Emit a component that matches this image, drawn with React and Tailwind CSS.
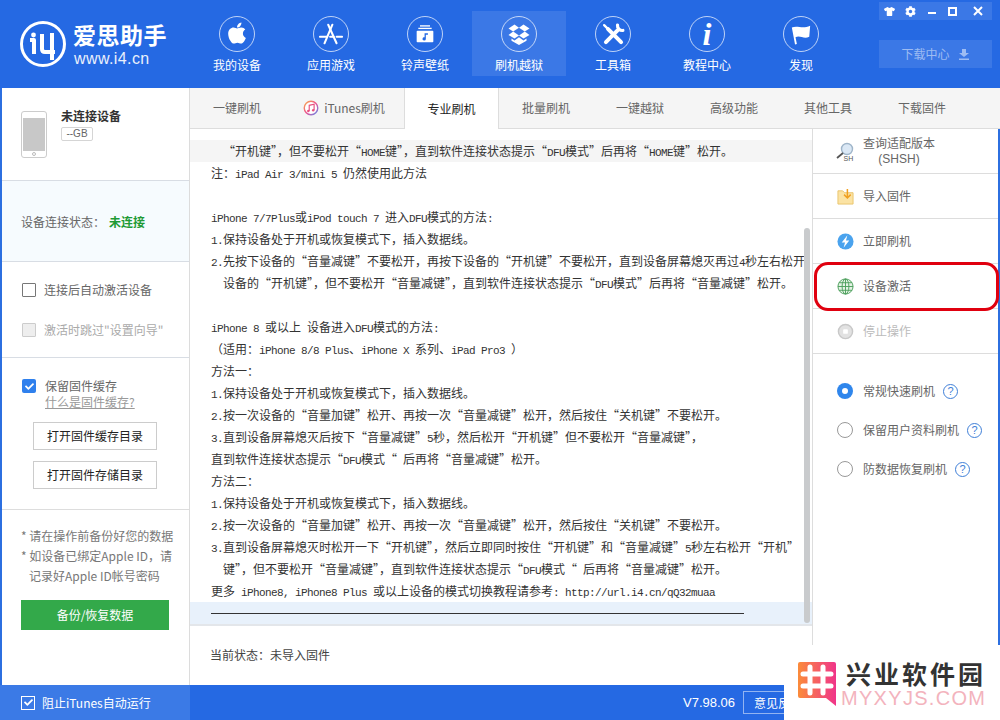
import React from 'react';
import { FaApple, FaCog, FaTshirt, FaCheck } from 'react-icons/fa';

const NAV = [
  { label: '我的设备', icon: <FaApple className="text-[24px] text-white -mt-0.5" /> },
  {
    label: '应用游戏',
    icon: (
      <svg viewBox="0 0 28 28" className="w-[26px] h-[26px]" fill="none" stroke="white" strokeWidth="2.2" strokeLinecap="round">
        <path d="M11 4 L20 24" />
        <path d="M15.5 4 L7 24" />
        <path d="M2 17 L10 17 M13 17 H17 M20 17 H26" strokeWidth="2" />
      </svg>
    ),
  },
  {
    label: '铃声壁纸',
    icon: (
      <svg viewBox="0 0 24 24" className="w-[20px] h-[20px]" fill="white">
        <rect x="6" y="1.5" width="12" height="1.6" />
        <rect x="4" y="4.5" width="16" height="1.6" />
        <path fillRule="evenodd" d="M3 8 H21 A1 1 0 0 1 22 9 V21 A1 1 0 0 1 21 22 H3 A1 1 0 0 1 2 21 V9 A1 1 0 0 1 3 8 Z M11.5 11 V16 A2 2 0 1 0 13 18 V13 H15.5 V11 Z" />
      </svg>
    ),
  },
  {
    label: '刷机越狱',
    icon: (
      <svg viewBox="0 0 24 24" className="w-[24px] h-[24px]" fill="white">
        <path d="M1.5 6.5 L7.5 2.5 L12 5.8 L6.2 9.6 Z" />
        <path d="M22.5 6.5 L16.5 2.5 L12 5.8 L17.8 9.6 Z" />
        <path d="M1.5 13 L6.2 9.6 L12 13.4 L7.5 16.6 Z" />
        <path d="M22.5 13 L17.8 9.6 L12 13.4 L16.5 16.6 Z" />
        <path d="M4.5 16.5 L7.5 18.4 L12 15.2 L16.5 18.4 L19.5 16.5 V18.8 L12 23 L4.5 18.8 Z" />
      </svg>
    ),
    active: true,
  },
  {
    label: '工具箱',
    icon: (
      <svg viewBox="0 0 28 28" className="w-[25px] h-[25px]" fill="none" stroke="white" strokeLinecap="round">
        <path d="M22.5 22.5 L8 8" strokeWidth="4.4" />
        <path d="M3.5 3.5 L8 8" strokeWidth="2.6" />
        <path d="M5.5 22.5 L18.5 9.5" strokeWidth="4.4" />
        <path d="M18.5 3.5 A5.5 5.5 0 0 0 24.5 9.5" strokeWidth="3.6" />
      </svg>
    ),
  },
  {
    label: '教程中心',
    icon: <span className="font-['Liberation_Serif'] font-bold italic text-[32px] leading-none text-white">i</span>,
  },
  {
    label: '发现',
    icon: (
      <svg viewBox="0 0 24 24" className="w-[22px] h-[22px]" fill="white">
        <path d="M2 5 C8 2 13 7 22 3 L21 15 C15 18 11 13 6 15.5 L7.5 23 L5.5 23.5 Z" />
      </svg>
    ),
  },
];

const TABS = [
  { label: '一键刷机', w: 'w-[94px]' },
  { label: 'iTunes刷机', w: 'w-[120px]', itunes: true },
  { label: '专业刷机', w: 'w-[95px]', active: true },
  { label: '批量刷机', w: 'w-[94px]' },
  { label: '一键越狱', w: 'w-[94px]' },
  { label: '高级功能', w: 'w-[94px]' },
  { label: '其他工具', w: 'w-[94px]' },
  { label: '下载固件', w: 'w-[94px]' },
];

const LINES = [
  '  “开机键”，但不要松开“HOME键”，直到软件连接状态提示“DFU模式”后再将“HOME键”松开。',
  '注：iPad Air 3/mini 5 仍然使用此方法',
  '',
  'iPhone 7/7Plus或iPod touch 7 进入DFU模式的方法:',
  '1.保持设备处于开机或恢复模式下，插入数据线。',
  '2.先按下设备的“音量减键”不要松开，再按下设备的“开机键”不要松开，直到设备屏幕熄灭再过4秒左右松开',
  '  设备的“开机键”，但不要松开“音量减键”，直到软件连接状态提示“DFU模式”后再将“音量减键”松开。',
  '',
  'iPhone 8 或以上 设备进入DFU模式的方法:',
  '（适用：iPhone 8/8 Plus、iPhone X 系列、iPad Pro3 ）',
  '方法一：',
  '1.保持设备处于开机或恢复模式下，插入数据线。',
  '2.按一次设备的“音量加键”松开、再按一次“音量减键”松开，然后按住“关机键”不要松开。',
  '3.直到设备屏幕熄灭后按下“音量减键”5秒，然后松开“开机键”但不要松开“音量减键”，',
  '直到软件连接状态提示“DFU模式“ 后再将“音量减键”松开。',
  '方法二：',
  '1.保持设备处于开机或恢复模式下，插入数据线。',
  '2.按一次设备的“音量加键”松开、再按一次“音量减键”松开，然后按住“关机键”不要松开。',
  '3.直到设备屏幕熄灭时松开一下“开机键”，然后立即同时按住“开机键”和“音量减键”5秒左右松开“开机”',
  '  键”，但不要松开“音量减键”，直到软件连接状态提示“DFU模式“ 后再将“音量减键”松开。',
  '更多 iPhone8, iPhone8 Plus 或以上设备的模式切换教程请参考: http://url.i4.cn/qQ32muaa',
];

// latin runs are half width in the original font, so squeeze the mono down to 6px a char
const Line = ({ text }) => (
  <>
    {text.split(/([\x20-\x7e]+)/).map((part, i) =>
      /^[\x20-\x7e]+$/.test(part) ? (
        <span key={i} className="font-['Liberation_Mono'] text-[11px] tracking-[-0.6px]">{part}</span>
      ) : (
        part
      )
    )}
  </>
);

const Help = () => (
  <span className="w-[15px] h-[15px] rounded-full border border-[#3f7fd8] text-[#3f7fd8] text-[11px] leading-[13px] text-center font-['Liberation_Sans'] shrink-0">?</span>
);

const ACTIONS = [
  {
    label: '导入固件',
    icon: (
      <svg viewBox="0 0 18 18" className="w-[17px] h-[17px]">
        <path d="M1 3 H6 L8 5 H17 V17 H1 Z" fill="#fbe3a4" stroke="#e9c46a" />
        <path d="M11 1 V10 M7.5 7 L11 10.5 L14.5 7" fill="none" stroke="#f0a020" strokeWidth="1.6" />
      </svg>
    ),
  },
  {
    label: '立即刷机',
    icon: (
      <svg viewBox="0 0 18 18" className="w-[17px] h-[17px]">
        <circle cx="9" cy="9" r="8.5" fill="#4aa3ee" />
        <path d="M11 2.5 L5 10 H8.5 L7 15.5 L13 8 H9.5 Z" fill="white" />
      </svg>
    ),
  },
  {
    label: '设备激活',
    icon: (
      <svg viewBox="0 0 18 18" className="w-[17px] h-[17px]" fill="#e4f2e4" stroke="#4c9f5c" strokeWidth="1">
        <circle cx="9" cy="9" r="8" />
        <ellipse cx="9" cy="9" rx="3.6" ry="8" fill="none" />
        <path d="M9 1 V17 M1 9 H17 M2 5 H16 M2 13 H16" fill="none" />
      </svg>
    ),
  },
  {
    label: '停止操作',
    muted: true,
    icon: (
      <svg viewBox="0 0 18 18" className="w-[17px] h-[17px]">
        <circle cx="9" cy="9" r="7.5" fill="#e2e2e2" stroke="#c8c8c8" strokeWidth="1.5" />
        <rect x="6.5" y="6.5" width="5" height="5" rx="1" fill="white" />
      </svg>
    ),
  },
];

const RADIOS = [
  { label: '常规快速刷机', on: true },
  { label: '保留用户资料刷机' },
  { label: '防数据恢复刷机' },
];

const Sidebar = () => (
  <aside className="w-[190px] shrink-0 flex flex-col border-l-2 border-[#2c6fe0] border-r border-r-[#dcdcdc] bg-white">
    <div className="h-[93px] flex border-b border-[#d8dde4] pl-[19px] pt-[23px] shrink-0">
      <div className="w-[26px] h-[47px] border border-[#cccccc] rounded-[3px] flex flex-col items-center pt-[6px]">
        <div className="w-[22px] h-[33px] bg-[#c8c8c8]" />
        <div className="w-[4px] h-[4px] rounded-full border border-[#bbbbbb] mt-[1px]" />
      </div>
      <div className="ml-[14px] -mt-[2px]">
        <div className="text-[12px] leading-[16px] font-bold text-[#333333] mt-[-1px]">未连接设备</div>
        <div className="mt-[3px] w-[32px] h-[14px] border border-[#d5d5d5] rounded-[2px] text-[10px] leading-[12px] text-[#666666] text-center font-['Liberation_Sans']">--GB</div>
      </div>
    </div>
    <div className="h-[81px] bg-[#f6fbfe] border-b border-[#d8dde4] flex items-center pl-[19px] pt-[2px] text-[12px] shrink-0">
      <span className="text-[#666666]">设备连接状态：</span>
      <span className="text-[#1f9a35] font-bold ml-[4px]">未连接</span>
    </div>
    <div className="h-[96px] border-b border-[#d8dde4] pl-[20px] shrink-0">
      <label className="flex items-center h-[14px] mt-[21px] text-[12px] text-[#666666]">
        <span className="w-[14px] h-[14px] border border-[#777777] rounded-[1px] bg-white" />
        <span className="ml-[8px]">连接后自动激活设备</span>
      </label>
      <label className="flex items-center h-[14px] mt-[26px] text-[12px] text-[#aaaaaa]">
        <span className="w-[14px] h-[14px] border border-[#cccccc] rounded-[1px] bg-[#eeeeee]" />
        <span className="ml-[8px]">激活时跳过"设置向导"</span>
      </label>
    </div>
    <div className="h-[152px] border-b border-[#dddddd] shrink-0">
      <div className="flex pl-[20px] pt-[20px]">
        <span className="w-[14px] h-[14px] rounded-[2px] bg-[#2f80ed] flex items-center justify-center mt-[1px]">
          <FaCheck className="text-white text-[9px]" />
        </span>
        <div className="ml-[9px] text-[12px] leading-[16px] text-[#666666]">
          <div>保留固件缓存</div>
          <div className="text-[#999999] underline">什么是固件缓存?</div>
        </div>
      </div>
      <div className="mt-[12px] ml-[31px] flex flex-col gap-[11px]">
        <button className="w-[124px] h-[28px] border border-[#cccccc] text-[12px] text-[#222222]">打开固件缓存目录</button>
        <button className="w-[124px] h-[28px] border border-[#cccccc] text-[12px] text-[#222222]">打开固件存储目录</button>
      </div>
    </div>
    <div className="pl-[19px] pt-[16px] text-[12px] leading-[20px] text-[#777777]">
      <div>* 请在操作前备份好您的数据</div>
      <div>* 如设备已绑定Apple ID，请</div>
      <div className="pl-[8px]">记录好Apple ID帐号密码</div>
    </div>
    <button className="mt-[14px] ml-[19px] w-[148px] h-[30px] bg-[#33a94a] text-white text-[12px]">备份/恢复数据</button>
  </aside>
);

const Content = () => (
  <main className="flex-1 flex flex-col min-w-0 bg-white">
    <div className="h-[41px] flex bg-[#f5f5f5] border-b border-[#dddddd] shrink-0">
      {TABS.map((t) => (
        <div
          key={t.label}
          className={
            t.w + ' flex items-center justify-center text-[12px] ' +
            (t.active
              ? 'bg-white text-[#222222] h-[41px] border-x border-[#dddddd]'
              : 'text-[#666666]')
          }
        >
          {t.itunes && (
            <svg viewBox="0 0 18 18" className="w-[16px] h-[16px] mr-[5px]">
              <defs>
                <linearGradient id="itunes" x1="0" y1="0" x2="1" y2="1">
                  <stop offset="0" stopColor="#f7b14a" />
                  <stop offset="0.5" stopColor="#ee4f8f" />
                  <stop offset="1" stopColor="#5a8cf0" />
                </linearGradient>
              </defs>
              <circle cx="9" cy="9" r="7.6" fill="white" stroke="url(#itunes)" strokeWidth="1.6" />
              <path d="M7 12.5 V6 L12.5 4.8 V11.2" fill="none" stroke="#e8507f" strokeWidth="1.3" />
              <circle cx="6" cy="12.5" r="1.4" fill="#e8507f" />
              <circle cx="11.5" cy="11.4" r="1.4" fill="#e8507f" />
            </svg>
          )}
          {t.label}
        </div>
      ))}
    </div>
    <div className="flex-1 flex min-h-0">
      <div className="w-[622px] shrink-0 flex flex-col">
        <div className="relative mt-[11px] h-[486px] border-b-2 border-[#e3e6ea]">
          {LINES.map((l, i) => (
            <div
              key={i}
              className={'h-[22px] leading-[22px] pl-[21px] text-[12px] text-[#333333] whitespace-pre ' + (i === 0 ? 'bg-[#f5f5f5]' : '')}
            >
              <Line text={l} />
            </div>
          ))}
          <div className="h-[22px] pl-[21px] pr-[68px] bg-[#e8f1fb] flex items-center">
            <div className="h-px w-full bg-[#333333]" />
          </div>
          <div className="absolute right-[2px] top-[88px] bottom-[1px] w-[6px] rounded-[3px] bg-[#c9cbcd]" />
        </div>
        <div className="flex-1 pl-[20px] pt-[21px] text-[12px] leading-[16px] text-[#444444]">当前状态：未导入固件</div>
      </div>
      <div className="flex-1 border-l border-[#dddddd] relative border-r-2 border-r-[#2c6fe0]">
        <div className="h-[45px] border-b border-[#dddddd] flex items-center pl-[23px] text-[12px] text-[#666666]">
          <svg viewBox="0 0 19 19" className="w-[19px] h-[19px] shrink-0">
            <circle cx="11" cy="7" r="5.5" fill="#dbe8f5" stroke="#9fb5c9" strokeWidth="1.4" />
            <path d="M7 11 L1 16" stroke="#555555" strokeWidth="1.8" />
            <text x="7.5" y="18.5" fontSize="7" fill="#555555" fontFamily="Liberation Sans">SH</text>
          </svg>
          <div className="ml-[8px] text-center leading-[17px]">
            <div>查询适配版本</div>
            <div className="font-['Liberation_Sans']">(SHSH)</div>
          </div>
        </div>
        {ACTIONS.map((a) => (
          <div
            key={a.label}
            className={'h-[45px] border-b border-[#dddddd] flex items-center pl-[24px] text-[12px] ' + (a.muted ? 'text-[#bbbbbb]' : 'text-[#666666]')}
          >
            <span className="shrink-0 mr-[9px] flex">{a.icon}</span>
            {a.label}
          </div>
        ))}
        <div className="pt-[29px] pl-[24px] flex flex-col gap-[23px]">
          {RADIOS.map((r) => (
            <div key={r.label} className="h-[16px] flex items-center text-[12px] text-[#666666]">
              {r.on ? (
                <span className="w-[16px] h-[16px] rounded-full bg-[#2f86ec] flex items-center justify-center shrink-0">
                  <span className="w-[6px] h-[6px] rounded-full bg-white" />
                </span>
              ) : (
                <span className="w-[16px] h-[16px] rounded-full border border-[#999999] shrink-0" />
              )}
              <span className="ml-[10px] mr-[8px]">{r.label}</span>
              <Help />
            </div>
          ))}
        </div>
        {/* red annotation around the activate row */}
        <div className="absolute left-[1px] top-[133px] w-[185px] h-[49px] rounded-[14px] border-[3px] border-[#e0000f]" />
      </div>
    </div>
  </main>
);

export default function App() {
  return (
    <div className="relative w-[1000px] h-[720px] overflow-hidden flex flex-col bg-white font-['Noto_Sans_CJK_SC','Liberation_Sans',sans-serif]">
      <header className="h-[88px] bg-[#2569e3] flex shrink-0">
        <div className="w-[190px] pl-[20px] pt-[21px] flex items-start shrink-0">
          <svg viewBox="0 0 46 46" className="w-[46px] h-[46px] shrink-0" fill="none" stroke="white">
            <circle cx="23" cy="23" r="21.5" strokeWidth="3" />
            <circle cx="13.5" cy="14" r="2.4" fill="white" stroke="none" />
            <path d="M10 19 H14 V33" strokeWidth="4" strokeLinejoin="round" />
            <path d="M22 13 V28 Q22 31 25 31 H35 M32 12 V39" strokeWidth="4" strokeLinejoin="round" />
          </svg>
          <div className="ml-[7px] text-white">
            <div className="text-[23px] leading-[27px] font-bold tracking-[0.5px] whitespace-nowrap">爱思助手</div>
            <div className="font-['Liberation_Sans'] text-[16px] leading-[18px] tracking-[0.4px] opacity-90 mt-[2px] ml-[1px]">www.i4.cn</div>
          </div>
        </div>
        <nav className="flex pt-[11px] h-[76px] box-content">
          {NAV.map((n) => (
            <div key={n.label} className={'w-[94px] h-[65px] flex flex-col items-center pt-[5px] ' + (n.active ? 'bg-white/10' : '')}>
              <div className="w-[36px] h-[36px] rounded-full border border-white/70 flex items-center justify-center">
                {n.icon}
              </div>
              <div className="text-[12px] leading-[16px] mt-[5px] text-white whitespace-nowrap">{n.label}</div>
            </div>
          ))}
        </nav>
        <div className="flex-1 flex flex-col items-end pr-[8px] pt-[2px]">
          <div className="w-[113px] h-[18px] flex bg-white/10 text-white">
            <div className="w-[21px] flex items-center justify-center"><FaTshirt className="text-[11px]" /></div>
            <div className="w-[21px] flex items-center justify-center"><FaCog className="text-[11px]" /></div>
            <div className="w-[21px] flex items-center justify-center"><span className="w-[8px] h-[2px] bg-white mt-[4px]" /></div>
            <div className="w-[21px] flex items-center justify-center"><span className="w-[9px] h-[9px] border-2 border-white" /></div>
            <div className="flex-1 flex items-center justify-center">
              <svg viewBox="0 0 10 10" className="w-[10px] h-[10px]" stroke="white" strokeWidth="2"><path d="M1 1 L9 9 M9 1 L1 9" /></svg>
            </div>
          </div>
          <div className="mt-[20px] w-[113px] h-[28px] bg-white/10 flex items-center justify-center text-[12px] text-white/50">
            下载中心
            <svg viewBox="0 0 12 12" className="w-[12px] h-[12px] ml-[8px]" fill="currentColor"><path d="M4 1 H8 V5 H11 L6 9 L1 5 H4 Z M1 10.5 H11 V12 H1 Z" /></svg>
          </div>
        </div>
      </header>
      <div className="flex-1 flex min-h-0">
        <Sidebar />
        <Content />
      </div>
      <footer className="h-[35px] bg-[#2569e3] flex items-center shrink-0 text-[12px] text-white">
        <div className="w-[190px] h-full bg-[#3b7ae6] flex items-center pl-[21px]">
          <span className="w-[14px] h-[14px] border border-white flex items-center justify-center"><FaCheck className="text-[9px]" /></span>
          <span className="ml-[7px]">阻止iTunes自动运行</span>
        </div>
        <span className="ml-[493px] font-['Liberation_Sans'] text-[13px]">V7.98.06</span>
        <span className="ml-[8px] w-[80px] h-[23px] border border-white/50 pl-[10px] leading-[21px]">意见反馈</span>
      </footer>
      {/* watermark over the corner */}
      <div className="absolute right-0 bottom-0 w-[216px] h-[75px] bg-white flex items-start pl-[14px] pt-[17px]">
        <svg viewBox="0 0 38 44" className="w-[38px] h-[44px] shrink-0">
          <defs>
            <linearGradient id="wm" x1="0" y1="0" x2="1" y2="0">
              <stop offset="0" stopColor="#fb8c3a" />
              <stop offset="1" stopColor="#f0348a" />
            </linearGradient>
          </defs>
          <path d="M2 0 H36 A2 2 0 0 1 38 2 V34 V44 L28 36 H2 A2 2 0 0 1 0 34 V2 A2 2 0 0 1 2 0 Z" fill="url(#wm)" />
          <path d="M12 5 V31 M25 5 V31 M5 12 H33 M5 24 H33" stroke="white" strokeWidth="5" strokeLinecap="round" />
        </svg>
        <div className="ml-[5px] -mt-[3px] whitespace-nowrap">
          <div className="ml-[5px] text-[25px] leading-[28px] font-bold text-[#333333] tracking-[3px]">兴业软件园</div>
          <div className="font-['Liberation_Sans'] text-[20px] leading-[22px] text-[#f3b3bd] tracking-[1.3px]">MYXYJS.COM</div>
        </div>
      </div>
    </div>
  );
}
